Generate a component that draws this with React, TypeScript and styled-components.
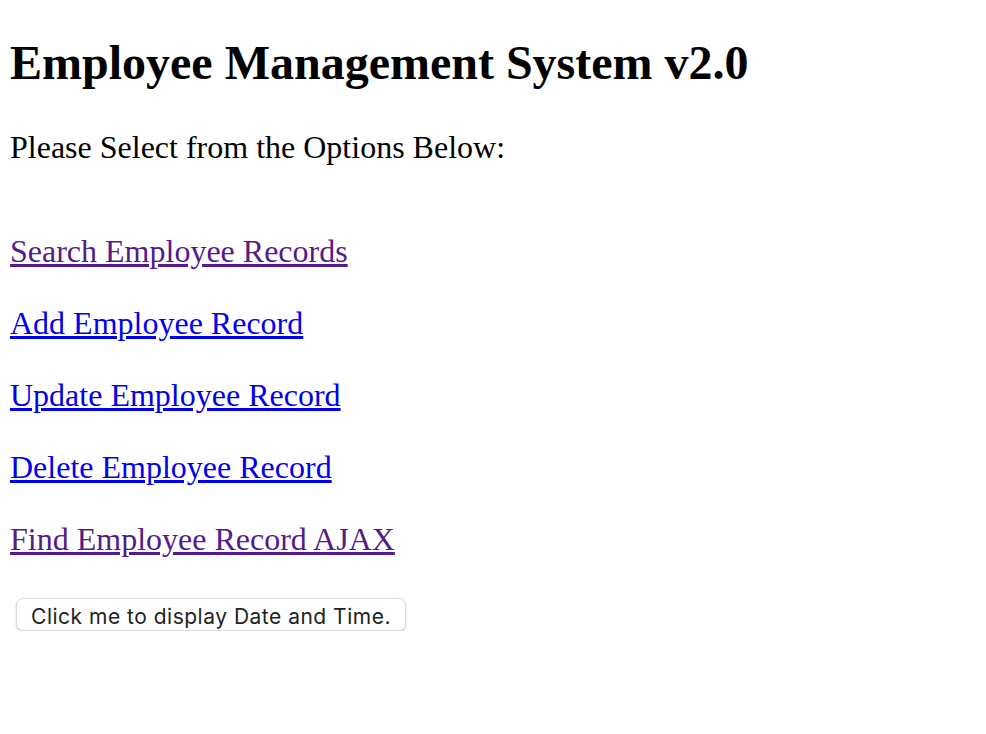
import React from "react";
import styled, { createGlobalStyle } from "styled-components";

const GlobalStyle = createGlobalStyle`
  html, body {
    margin: 0;
    padding: 0;
    background: #ffffff;
  }
`;

interface MenuLink {
  label: string;
  href: string;
  visited?: boolean;
}

const links: MenuLink[] = [
  { label: "Search Employee Records", href: "#search", visited: true },
  { label: "Add Employee Record", href: "#add" },
  { label: "Update Employee Record", href: "#update" },
  { label: "Delete Employee Record", href: "#delete" },
  { label: "Find Employee Record AJAX", href: "#find", visited: true },
];

const App: React.FC = () => {
  const [now, setNow] = React.useState<string>("");

  return (
    <Page>
      <GlobalStyle />
      <Title>Employee Management System v2.0</Title>
      <Intro>Please Select from the Options Below:</Intro>

      <Menu>
        {links.map((link) => (
          <MenuItem key={link.href} href={link.href} $visited={link.visited}>
            {link.label}
          </MenuItem>
        ))}
      </Menu>

      <DateButton type="button" onClick={() => setNow(new Date().toString())}>
        Click me to display Date and Time.
      </DateButton>
      {now && <DateText>{now}</DateText>}
    </Page>
  );
};

export default App;

const Page = styled.div`
  padding: 0 10px;
  font-family: "Liberation Serif", "Times New Roman", serif;
  color: #000000;
`;

const Title = styled.h1`
  margin: 35px 0 0;
  font-size: 48px;
  font-weight: 700;
  line-height: 55px;
`;

const Intro = styled.p`
  margin: 39px 0 0;
  font-size: 32px;
  line-height: 37px;
`;

const Menu = styled.nav`
  display: flex;
  flex-direction: column;
  align-items: flex-start;
  gap: 35px;
  margin-top: 67px;
`;

const MenuItem = styled.a<{ $visited?: boolean }>`
  font-size: 32px;
  line-height: 37px;
  color: ${(props) => (props.$visited ? "#551a8b" : "#0000ee")};
  text-decoration: underline;
  text-underline-offset: 2px;
`;

const DateButton = styled.button`
  display: block;
  margin: 40px 0 0 6px;
  height: 33px;
  width: 390px;
  padding: 3px 14px 0;
  border: 1px solid #dadada;
  border-radius: 7px;
  background: #ffffff;
  box-shadow: 0 1px 2px rgba(0, 0, 0, 0.2);
  font-family: Inter, "Liberation Sans", sans-serif;
  font-size: 21px;
  letter-spacing: 0.5px;
  color: #222222;
  cursor: pointer;
`;

const DateText = styled.p`
  margin: 12px 0 0;
  font-size: 20px;
`;
